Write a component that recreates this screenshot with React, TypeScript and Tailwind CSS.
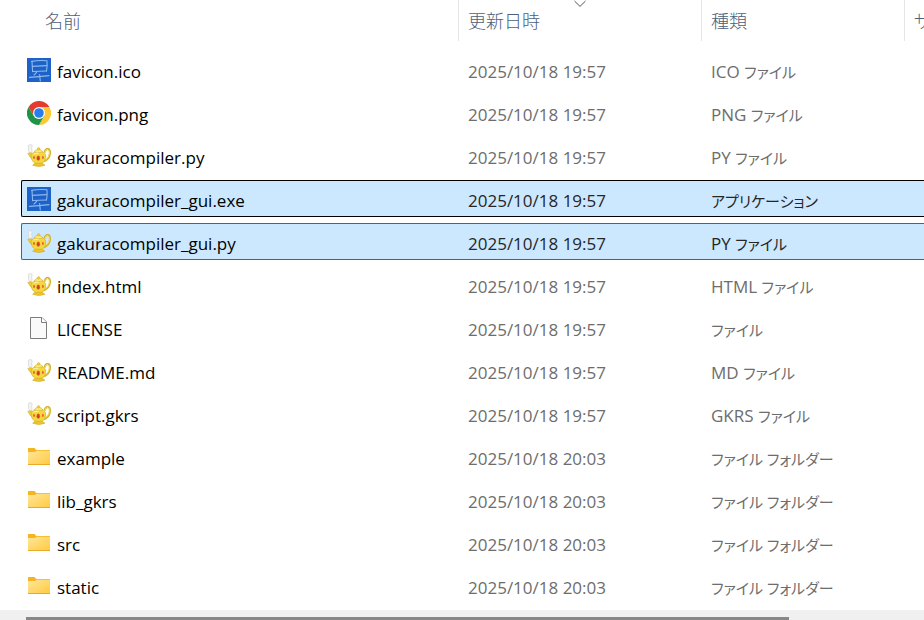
import React from 'react';
import { clsx } from 'clsx';

type IconKind = 'kanji' | 'chrome' | 'teapot' | 'blank' | 'folder';

interface FileEntry {
  name: string;
  icon: IconKind;
  modified: string;
  ext?: string;
  type: string;
  state?: 'focused' | 'selected';
}

const files: FileEntry[] = [
  { name: 'favicon.ico', icon: 'kanji', modified: '2025/10/18 19:57', ext: 'ICO', type: 'ファイル' },
  { name: 'favicon.png', icon: 'chrome', modified: '2025/10/18 19:57', ext: 'PNG', type: 'ファイル' },
  { name: 'gakuracompiler.py', icon: 'teapot', modified: '2025/10/18 19:57', ext: 'PY', type: 'ファイル' },
  { name: 'gakuracompiler_gui.exe', icon: 'kanji', modified: '2025/10/18 19:57', type: 'アプリケーション', state: 'focused' },
  { name: 'gakuracompiler_gui.py', icon: 'teapot', modified: '2025/10/18 19:57', ext: 'PY', type: 'ファイル', state: 'selected' },
  { name: 'index.html', icon: 'teapot', modified: '2025/10/18 19:57', ext: 'HTML', type: 'ファイル' },
  { name: 'LICENSE', icon: 'blank', modified: '2025/10/18 19:57', type: 'ファイル' },
  { name: 'README.md', icon: 'teapot', modified: '2025/10/18 19:57', ext: 'MD', type: 'ファイル' },
  { name: 'script.gkrs', icon: 'teapot', modified: '2025/10/18 19:57', ext: 'GKRS', type: 'ファイル' },
  { name: 'example', icon: 'folder', modified: '2025/10/18 20:03', type: 'ファイル フォルダー' },
  { name: 'lib_gkrs', icon: 'folder', modified: '2025/10/18 20:03', type: 'ファイル フォルダー' },
  { name: 'src', icon: 'folder', modified: '2025/10/18 20:03', type: 'ファイル フォルダー' },
  { name: 'static', icon: 'folder', modified: '2025/10/18 20:03', type: 'ファイル フォルダー' },
];

function KanjiIcon() {
  return (
    <svg viewBox="0 0 24 24" className="size-6" aria-hidden="true">
      <rect width="24" height="24" fill="#1c62c8" />
      <g fill="none" stroke="#8fb9f0" strokeWidth="1.1" strokeLinecap="round" strokeLinejoin="round">
        <path d="M5 3.5 L5.6 13.6" />
        <path d="M4.5 3.4 Q12 2 20 2.8 Q20.5 8 19.5 13" />
        <path d="M5.5 8.4 L19.5 7.6" />
        <path d="M5.7 13.5 L19.5 13" />
        <path d="M10 13.5 Q9 15.5 7 17" />
        <path d="M2.5 19.4 L12 18.6 L22 17.6" />
        <path d="M12.6 16.5 L13.3 23" />
      </g>
    </svg>
  );
}

function ChromeIcon() {
  return (
    <svg viewBox="0 0 24 24" className="size-6" aria-hidden="true">
      <path d="M12 12 L1.6 6 A12 12 0 0 1 22.4 6 Z" fill="#e33b2e" />
      <path d="M12 6 H22.4 A12 12 0 0 1 12 24 L17.2 15 Z" fill="#fcc934" />
      <path d="M1.6 6 A12 12 0 0 0 12 24 L17.2 15 L12 12 L6.8 15 Z" fill="#1e9446" />
      <path d="M1.6 6 L6.8 15 L12 12 L12 6 Z" fill="#e33b2e" />
      <circle cx="12" cy="12" r="6" fill="#fff" />
      <circle cx="12" cy="12" r="4.8" fill="#2b7de9" />
    </svg>
  );
}

function TeapotIcon() {
  return (
    <svg viewBox="0 0 24 24" className="size-6" aria-hidden="true">
      <path d="M1.2 1.5 Q3 -0.3 4.8 1 Q5.6 2.5 4.6 4 Q5.4 6 4.8 8.5 L2.6 9 Q0.8 6 1.6 4 Z" fill="#f3f3f1" stroke="#cfcfcb" strokeWidth="0.6" />
      <path d="M17.6 8.6 Q18.2 4.6 21 4.9 Q23.6 5.6 22.8 10.4 Q22 15.2 17 17.4" fill="none" stroke="#cfae2a" strokeWidth="2" />
      <path d="M17.8 8.6 Q18.6 5.1 21 5.4 Q22.9 6 22.3 10.4 Q21.4 14.6 17 16.8" fill="none" stroke="#f7e05a" strokeWidth="1" />
      <path d="M0.8 9.4 L4 8.8 L6.4 10.7 L6 16 Q3 13.6 0.8 9.4 Z" fill="#f0cf37" stroke="#c9a323" strokeWidth="0.5" />
      <path d="M4.2 11.4 Q5.4 7.4 11.6 7.2 Q18.2 7.4 18.8 11.8 Q18.8 17.4 15 19.6 H8.4 Q3.8 16.6 4.2 11.4 Z" fill="#f5d840" stroke="#cda726" strokeWidth="0.6" />
      <path d="M7.2 8 Q8 5.4 11.6 5.2 Q15.1 5.4 15.8 8 Q11.6 9.4 7.2 8 Z" fill="#fae976" stroke="#cda726" strokeWidth="0.5" />
      <circle cx="11.6" cy="4.8" r="1.2" fill="#f5d63d" stroke="#cda726" strokeWidth="0.5" />
      <path d="M8 19.2 H15.2 L18 21.2 Q12 24 5.6 21.2 Z" fill="#ecc52d" stroke="#c9a323" strokeWidth="0.5" />
      <path d="M6.6 10 Q8.6 9 11.6 9.2" fill="none" stroke="#fff7b5" strokeWidth="1" />
      <ellipse cx="11.3" cy="14.2" rx="1.6" ry="2.4" fill="#dc3a22" stroke="#c08a2a" strokeWidth="0.4" />
      <ellipse cx="7" cy="13.4" rx="0.9" ry="1.7" fill="#e0662f" />
      <ellipse cx="15.9" cy="13.4" rx="0.9" ry="1.7" fill="#e0662f" />
    </svg>
  );
}

function BlankFileIcon() {
  return (
    <svg viewBox="0 0 24 24" className="size-6" aria-hidden="true">
      <path d="M3.5 1.5 H15 L19.5 6 V22.5 H3.5 Z" fill="#fafafa" stroke="#7d7d7d" strokeWidth="1" />
      <path d="M14.5 1.5 V6.5 H19.5" fill="#fff" stroke="#7d7d7d" strokeWidth="1" />
    </svg>
  );
}

function FolderIcon() {
  return (
    <svg viewBox="0 0 24 24" className="size-6" aria-hidden="true">
      <defs>
        <linearGradient id="folder-front" x1="0" y1="0" x2="1" y2="1">
          <stop offset="0" stopColor="#ffe69c" />
          <stop offset="1" stopColor="#ffca3e" />
        </linearGradient>
      </defs>
      <path d="M1 3.6 Q1 3 1.6 3 H7.6 L9.2 5 H22.4 Q23 5 23 5.6 V10 H1 Z" fill="#f5b51e" />
      <path d="M1 7 H8 L9.6 5.8 H23 V19.4 Q23 20 22.4 20 H1.6 Q1 20 1 19.4 Z" fill="url(#folder-front)" />
      <path d="M1 19 H23 V19.4 Q23 20 22.4 20 H1.6 Q1 20 1 19.4 Z" fill="#eba92b" />
    </svg>
  );
}

const icons: Record<IconKind, () => React.JSX.Element> = {
  kanji: KanjiIcon,
  chrome: ChromeIcon,
  teapot: TeapotIcon,
  blank: BlankFileIcon,
  folder: FolderIcon,
};

function FileRow({ file }: { file: FileEntry }) {
  const Icon = icons[file.icon];
  const cell = clsx(
    'flex h-[37px] items-center border-y whitespace-nowrap',
    !file.state && 'border-transparent',
    file.state === 'focused' && 'border-black bg-[#cce8ff]',
    file.state === 'selected' && 'border-[#0078d4] bg-[#cce8ff]'
  );
  const detail = clsx('pt-1 pl-2.5', file.state ? 'text-[#262626]' : 'text-[#6d6d6d]');

  return (
    <tr aria-selected={!!file.state}>
      <td className="h-[43px] p-0">
        <div className={clsx(cell, 'gap-1.5 rounded-l-xs border-l pl-[5px] text-black')}>
          <Icon />
          <span className="pt-1">{file.name}</span>
        </div>
      </td>
      <td className="p-0">
        <div className={clsx(cell, detail)}>{file.modified}</div>
      </td>
      <td className="p-0">
        <div className={clsx(cell, detail)}>
          <span>
            {file.ext && `${file.ext} `}
            <span className="text-[15px]">{file.type}</span>
          </span>
        </div>
      </td>
      <td className="p-0">
        <div className={cell} />
      </td>
    </tr>
  );
}

const headCell = 'flex h-[41px] items-center border-l pl-[9px] whitespace-nowrap';

export default function App() {
  return (
    <div className="flex min-h-screen flex-col overflow-hidden bg-white font-['Open_Sans','Noto_Sans_CJK_JP',sans-serif] text-[17px] leading-6 [font-feature-settings:'palt']">
      <main className="flex-1 overflow-hidden pl-[21px]">
        <table className="w-full table-fixed border-separate border-spacing-0">
          <colgroup>
            <col />
            <col className="w-[243px]" />
            <col className="w-[203px]" />
            <col className="w-5" />
          </colgroup>
          <thead className="text-left text-lg text-[#4c607a]">
            <tr>
              <th className="h-12 p-0 align-top font-light">
                <div className={clsx(headCell, 'border-transparent')}>
                  <span className="pl-3.5">名前</span>
                </div>
              </th>
              <th className="p-0 align-top font-light" aria-sort="descending">
                <div className={clsx(headCell, 'relative border-[#e5e5e5]')}>
                  更新日時
                  <svg viewBox="0 0 12 7" className="absolute top-0 left-1/2 h-[7px] w-3 -translate-x-1/2" aria-hidden="true">
                    <path d="M0.5 1 L6 6.4 L11.5 1" fill="none" stroke="#555" />
                  </svg>
                </div>
              </th>
              <th className="p-0 align-top font-light">
                <div className={clsx(headCell, 'border-[#e5e5e5]')}>種類</div>
              </th>
              <th className="p-0 align-top font-light">
                <div className={clsx(headCell, 'overflow-hidden border-[#e5e5e5]')}>サイズ</div>
              </th>
            </tr>
          </thead>
          <tbody>
            {files.map((file) => (
              <FileRow key={file.name} file={file} />
            ))}
          </tbody>
        </table>
      </main>

      {/* Horizontal scrollbar */}
      <div className="h-2.5 bg-[#f0f0f0] pt-[7px] pl-[26px]">
        <div className="h-[3px] w-[85%] bg-[#868686]" />
      </div>
    </div>
  );
}
